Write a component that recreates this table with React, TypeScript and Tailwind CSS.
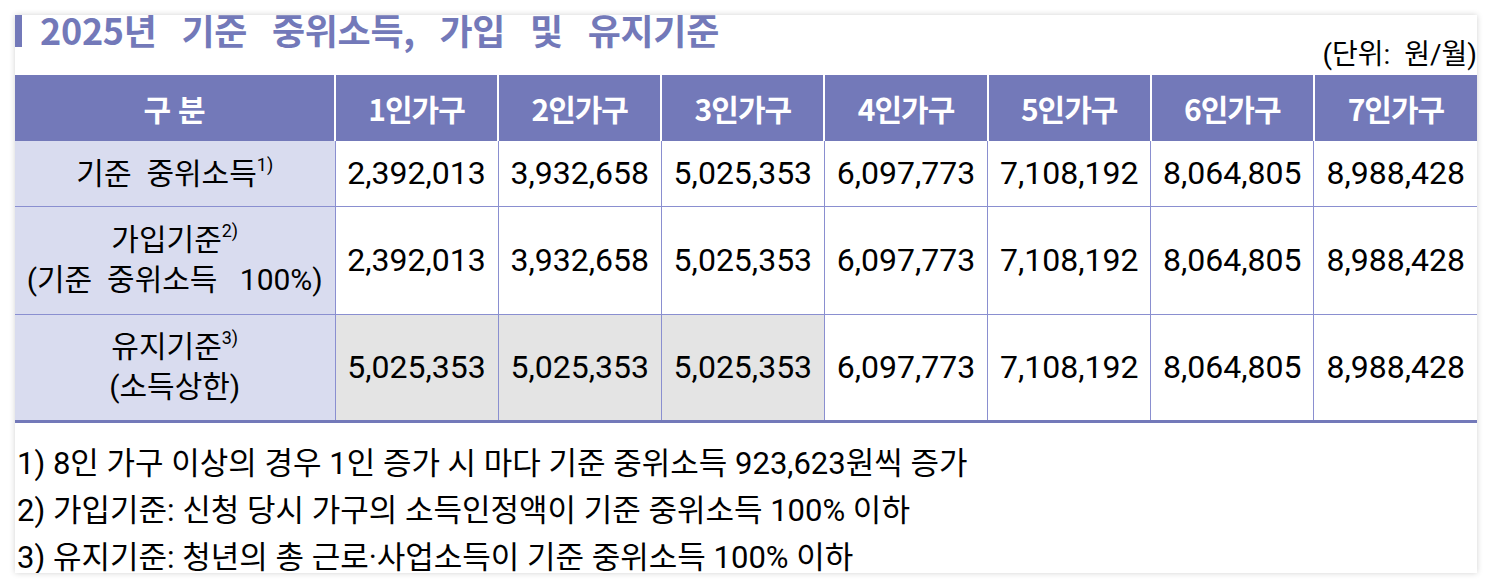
import React from "react";

const cols = ["1인가구", "2인가구", "3인가구", "4인가구", "5인가구", "6인가구", "7인가구"];

const median = ["2,392,013", "3,932,658", "5,025,353", "6,097,773", "7,108,192", "8,064,805", "8,988,428"];
const keep = ["5,025,353", "5,025,353", "5,025,353", "6,097,773", "7,108,192", "8,064,805", "8,988,428"];

const body = "font-['Roboto','Noto_Sans_CJK_KR',sans-serif]";

const App: React.FC = () => {
  return (
    <div className="w-[1492px] h-[588px] bg-white pt-[15px] pl-[15px]">
      <div className="w-[1462px] h-[558px] bg-white overflow-hidden shadow-[0_0_6px_rgba(0,0,0,0.18)]">
        <div className="flex justify-between h-[60px]">
          <div className="flex items-start">
            <div className="w-[7px] h-[32px] bg-[#7379b9]" />
            <h1 className="ml-[18px] leading-[29px] text-[36px] font-bold text-[#7379b9] [word-spacing:17px] font-['Noto_Sans_CJK_KR',sans-serif] tracking-[-0.3px]">
              2025년 기준 중위소득, 가입 및 유지기준
            </h1>
          </div>
          <p className={`self-end mb-[5px] text-[28px] leading-[30px] text-black ${body}`}>
            (단위:&nbsp; 원/월)
          </p>
        </div>
        <table className={`w-[1462px] table-fixed border-collapse text-black ${body}`}>
          <colgroup>
            <col className="w-[320px]" />
            {cols.map((c) => (
              <col key={c} />
            ))}
          </colgroup>
          <thead>
            <tr className="h-[66px] bg-[#7379b9] text-white">
              <th className="text-[30px] font-bold font-['Noto_Sans_CJK_KR',sans-serif] border-r-2 border-white">
                구 분
              </th>
              {cols.map((c, i) => (
                <th
                  key={c}
                  className={`text-[30px] font-bold font-['Noto_Sans_CJK_KR',sans-serif] tracking-[-1px] ${
                    i < cols.length - 1 ? "border-r-2 border-white" : ""
                  }`}
                >
                  {c}
                </th>
              ))}
            </tr>
          </thead>
          <tbody className="text-[32px]">
            <tr className="h-[65px]">
              <td className="bg-[#d9dcef] text-center text-[30px] border-r border-[#8a8fd0]">
                기준&nbsp; 중위소득<sup className="text-[18px] relative -top-[13px]">1)</sup>
              </td>
              {median.map((v, i) => (
                <td key={i} className={`text-center ${i < 6 ? "border-r border-[#8a8fd0]" : ""}`}>
                  {v}
                </td>
              ))}
            </tr>
            <tr className="h-[108px] border-t border-[#8a8fd0]">
              <td className="bg-[#d9dcef] text-center text-[30px] leading-[40px] border-r border-[#8a8fd0]">
                가입기준<sup className="text-[18px] relative -top-[13px]">2)</sup>
                <br />
                (기준&nbsp; 중위소득&nbsp;&nbsp; 100%)
              </td>
              {median.map((v, i) => (
                <td key={i} className={`text-center ${i < 6 ? "border-r border-[#8a8fd0]" : ""}`}>
                  {v}
                </td>
              ))}
            </tr>
            <tr className="h-[107px] border-t border-[#8a8fd0] border-b-[3px] border-b-[#7379b9]">
              <td className="bg-[#d9dcef] text-center text-[30px] leading-[40px] border-r border-[#8a8fd0]">
                유지기준<sup className="text-[18px] relative -top-[13px]">3)</sup>
                <br />
                (소득상한)
              </td>
              {keep.map((v, i) => (
                <td
                  key={i}
                  className={`text-center ${i < 3 ? "bg-[#e4e4e4]" : ""} ${
                    i < 6 ? "border-r border-[#8a8fd0]" : ""
                  }`}
                >
                  {v}
                </td>
              ))}
            </tr>
          </tbody>
        </table>
        <div className={`pt-[17px] pl-[2px] text-[31px] leading-[47px] text-black ${body}`}>
          <p>1) 8인 가구 이상의 경우 1인 증가 시 마다 기준 중위소득 923,623원씩 증가</p>
          <p>2) 가입기준: 신청 당시 가구의 소득인정액이 기준 중위소득 100% 이하</p>
          <p>3) 유지기준: 청년의 총 근로·사업소득이 기준 중위소득 100% 이하</p>
        </div>
      </div>
    </div>
  );
};

export default App;
